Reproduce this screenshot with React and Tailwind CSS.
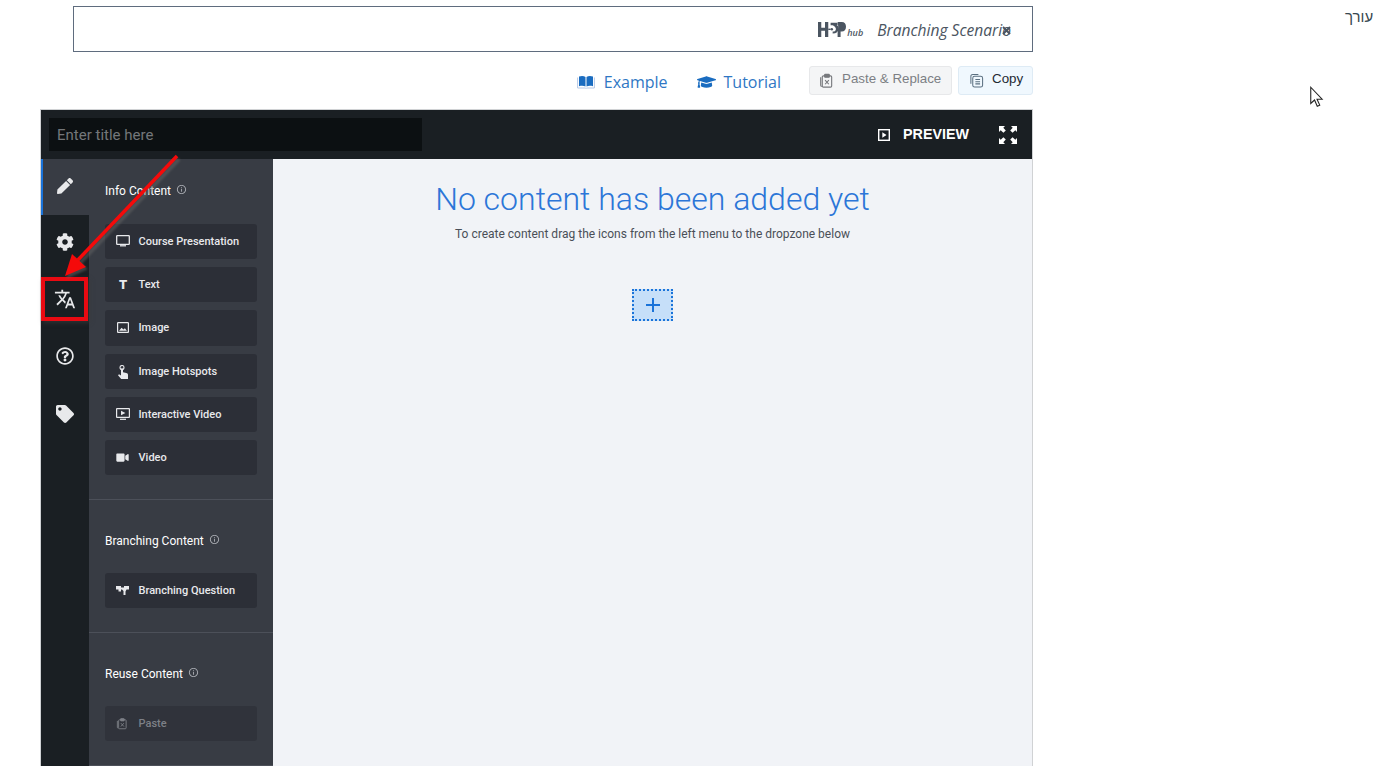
import React from "react";
import { FaPen, FaCog, FaTag, FaRegQuestionCircle, FaGraduationCap, FaVideo } from "react-icons/fa";
import { MdTranslate, MdInfoOutline } from "react-icons/md";

const roboto = "font-['Roboto',sans-serif]";

function ClipboardX({ className }) {
  return (
    <svg viewBox="0 0 16 16" className={className} fill="none" stroke="currentColor" strokeWidth="1.2">
      <rect x="3.5" y="3" width="10" height="12" rx="1.2" />
      <path d="M1.8 4.500v8.500a1.500 1.500 0 0 0 1.200 1.400" />
      <rect x="6" y="1.500" width="5" height="3" rx=".6" fill="currentColor" />
      <path d="M6.500 7.500l4 4.500M10.500 7.500l-4 4.500" />
    </svg>
  );
}

function CopyDoc({ className }) {
  return (
    <svg viewBox="0 0 16 16" className={className} fill="none" stroke="currentColor" strokeWidth="1.1">
      <path d="M2 11.500V3.500A2 2 0 0 1 4 1.500h6" />
      <rect x="4" y="3.500" width="10.500" height="11.500" rx="2" />
      <path d="M6.800 7h5M6.800 9.300h5M6.800 11.600h5" />
    </svg>
  );
}

function BookIcon() {
  return (
    <svg viewBox="0 0 18 14" className="w-[18px] h-[14px] mr-[9px]">
      <path d="M.6 2.500v10.500h7.400c.5 0 .8.500 1 .6.200-.1.500-.6 1-.6h7.400V2.500" fill="none" stroke="#b6c8e6" strokeWidth="1" />
      <path d="M2 1.500C4.500.6 7 .8 8.500 2v9.600C7 10.700 4.500 10.600 2 11.200z" fill="#1a6cc0" />
      <path d="M16 1.500C13.500.6 11 .8 9.500 2v9.600c1.500-.9 4-1 6.500-.4z" fill="#1a6cc0" />
    </svg>
  );
}

function TvIcon() {
  return (
    <svg viewBox="0 0 14 12" className="w-[14px] h-[12px] -mt-[1px]" fill="none" stroke="currentColor" strokeWidth="1.3">
      <rect x=".7" y=".7" width="12.600" height="8.600" rx=".6" />
      <path d="M4 10.800h6" />
    </svg>
  );
}

function TextIcon() {
  return <span className="w-[14px] text-center text-[13px] font-black leading-none font-['Roboto',sans-serif] -mt-[1px]">T</span>;
}

function ImageIcon() {
  return (
    <svg viewBox="0 0 12 11" className="w-[12px] h-[11px] ml-[1px]" fill="none" stroke="currentColor" strokeWidth="1.2">
      <rect x=".6" y=".6" width="10.800" height="9.800" rx=".5" />
      <path d="M2 8.700l2.600-3 1.800 1.800 1.500-1.300 2 2.500z" fill="currentColor" stroke="none" />
    </svg>
  );
}

function HotspotIcon() {
  return (
    <svg viewBox="0 0 12 14" className="w-[12px] h-[14px] ml-[1px]" fill="currentColor">
      <circle cx="5" cy="2.500" r="2" fill="none" stroke="currentColor" strokeWidth="1.100" />
      <path d="M4 3.500h2v3.700l3.300.7c1 .2 1.700.8 1.700 1.800V14H4.200L1 10.200l1-.9 2 1.200z" />
    </svg>
  );
}

function InteractiveVideoIcon() {
  return (
    <svg viewBox="0 0 14 12" className="w-[14px] h-[12px] -mt-[1px]" fill="none" stroke="currentColor" strokeWidth="1.2">
      <rect x=".6" y=".6" width="12.800" height="8.800" rx=".4" />
      <path d="M5 2.700v4.600L9.400 5z" fill="currentColor" stroke="none" />
      <path d="M4 11.300h6" />
    </svg>
  );
}

function BranchIcon() {
  return (
    <svg viewBox="0 0 13 9" className="w-[13px] h-[9px]" fill="currentColor">
      <path d="M0 0h5v1.500h3V0h5v3.500h-2.500L9.500 5.500V9H7.500V5L6 3.500H5V5.500H2.500V3.500H0z" />
    </svg>
  );
}

function ContentButton({ icon, label, disabled, className = "h-[35px]" }) {
  return (
    <div
      className={`w-[152px] rounded-[3px] flex items-center bg-[#2c2f37] pl-[11px] text-[11px] font-medium ${roboto} ${
        disabled ? "text-[#7d8087] bg-[#30333b]" : "text-[#e8e9ec]"
      } ${className}`}
    >
      <span className="w-[22.500px] flex items-center justify-start shrink-0">{icon}</span>
      <span className="pt-[1px]">{label}</span>
    </div>
  );
}

function Heading({ label }) {
  return (
    <div className={`flex items-center text-[12px] text-white leading-[16px] h-[16px] ${roboto}`}>
      <span>{label}</span>
      <MdInfoOutline className="ml-[5px] -mt-[3px] w-[11px] h-[11px] text-[#a8abb1]" />
    </div>
  );
}

function RailItem({ children, active }) {
  return (
    <div
      className={`h-[56px] w-[48px] flex items-center justify-center text-[#e8e9eb] ${
        active ? "bg-[#383c44] border-l-[2px] border-[#1a73d9] pr-[2px] pb-[2px]" : ""
      }`}
    >
      {children}
    </div>
  );
}

function FullscreenIcon() {
  return (
    <svg viewBox="0 0 18 18" className="w-[18px] h-[18px]" fill="#fff">
      <path d="M0 0h6L4.300 1.700 6.800 4.400 4.400 6.800 1.700 4.300 0 6zM18 0v6l-1.700-1.700L13.600 6.800 11.200 4.400l2.500-2.700L12 0zM0 18v-6l1.700 1.700L4.400 11.200 6.800 13.600l-2.500 2.700L6 18zM18 18h-6l1.700-1.700L11.200 13.600 13.600 11.200l2.700 2.500L18 12z" />
    </svg>
  );
}

function H5PLogo() {
  return (
    <div className="flex items-end">
      <svg viewBox="0 0 30 15" preserveAspectRatio="none" className="w-[28px] h-[15px]" fill="#4b5561">
        <path d="M0 0h3.500v5.800h4V0h3.500v15H7.500V8.800h-4V15H0z" />
        <rect x="11" y="6.600" width="2.500" height="1.400" />
        <circle cx="14.800" cy="7.300" r="1.300" />
        <path d="M13.500 .8h7.500v2.400h-1.200c2 .6 2.600 2.200 2.400 3.800-.3 2.600-2.400 4.600-6.500 4.600v-2c2.300 0 3.500-1 3.500-2.600 0-1.500-1.300-2.800-3.500-3.800h-2.200z" />
        <path d="M21 0h4.500c2.900 0 4.500 1.800 4.500 4.700s-1.700 4.900-4.500 4.900h-1.300V15H21v-4l.4-3.300c.5-2.500.2-4.800-.4-7.700z" />
      </svg>
      <span className="italic font-['Open_Sans',sans-serif] text-[9px] leading-[10px] text-[#4b5561] ml-[1px] -mb-[1px] font-semibold">hub</span>
    </div>
  );
}

export default function App() {
  return (
    <div className="relative w-[1393px] h-[766px] overflow-hidden bg-white flex items-start">
      <main className="ml-[40px] w-[993px] shrink-0 flex flex-col items-end pt-[6px]">
        <header className="w-[960px] h-[46px] border border-[#5f6c7e] flex items-center justify-end pr-[21px] gap-[14px]">
          <H5PLogo />
          <span className="italic text-[#4b5561] text-[15.600px] font-['Open_Sans',sans-serif] relative translate-y-[2px]">
            Branching Scenario
            <svg viewBox="0 0 9 9" className="absolute right-[0px] top-[7px] w-[9px] h-[9px]" stroke="#4b5561" strokeWidth="2" fill="none">
              <path d="M1 1l7 7M8 1l-7 7" />
            </svg>
          </span>
        </header>

        <nav className="mt-[13px] h-[30px] flex items-center">
          <a className="flex items-center text-[#2f77c4] text-[16px] font-['Open_Sans',sans-serif] translate-y-[2px]">
            <BookIcon />
            Example
          </a>
          <a className="ml-[29px] flex items-center text-[#2f77c4] text-[16px] font-['Open_Sans',sans-serif] translate-y-[2px]">
            <FaGraduationCap className="w-[19px] h-[16px] text-[#1a6cc0] mr-[8px]" />
            Tutorial
          </a>
          <button className="ml-[28px] h-[29px] w-[143px] rounded-[3px] border border-[#e7e8ea] bg-[#f4f5f6] text-[#7c7f84] flex items-center pl-[9px] pb-[2px] text-[13.333px] font-['Liberation_Sans',sans-serif]">
            <ClipboardX className="w-[15px] h-[15px] mr-[8px] mt-[2px] text-[#77797d]" />
            Paste &amp; Replace
          </button>
          <button className="ml-[6px] h-[29px] w-[75px] rounded-[3px] border border-[#deebf5] bg-[#f0f8fe] text-[#1f2a33] flex items-center pl-[10px] pb-[2px] text-[13.333px] font-['Liberation_Sans',sans-serif]">
            <CopyDoc className="w-[15px] h-[15px] mr-[8px] mt-[2px] text-[#5a6f80]" />
            Copy
          </button>
        </nav>

        <section className="mt-[14px] w-[993px] h-[657px] border-t border-l border-r border-[#d0d2d4] flex flex-col">
          <div className="h-[49px] shrink-0 bg-[#1a1f23] flex items-center pl-[8px] pr-[15px]">
            <div className={`w-[373px] h-[33px] bg-[#0c1012] pl-[8px] pt-[1px] flex items-center text-[15px] text-[#74777a] ${roboto}`}>
              Enter title here
            </div>
            <div className="ml-auto flex items-center">
              <svg viewBox="0 0 12 12" className="w-[12px] h-[12px]" fill="none" stroke="#fff" strokeWidth="1.400">
                <rect x=".7" y=".7" width="10.600" height="10.600" />
                <path d="M4.300 3.300v5.400L8.500 6z" fill="#fff" stroke="none" />
              </svg>
              <span className="ml-[13px] text-[14.300px] font-bold text-white font-['Liberation_Sans',sans-serif]">PREVIEW</span>
              <span className="ml-[30px]"><FullscreenIcon /></span>
            </div>
          </div>

          <div className="flex-1 flex min-h-0">
            <aside className="w-[48px] shrink-0 bg-[#1a1f23] flex flex-col">
              <RailItem active><FaPen className="w-[16px] h-[16px]" /></RailItem>
              <div className="flex flex-col -mt-[1px] gap-[1px]">
                <RailItem><FaCog className="w-[18px] h-[18px]" /></RailItem>
                <RailItem><MdTranslate className="w-[22px] h-[22px] -mt-[1px]" /></RailItem>
                <RailItem><FaRegQuestionCircle className="w-[18px] h-[18px]" /></RailItem>
                <RailItem><FaTag className="w-[18px] h-[18px] mt-[1px]" /></RailItem>
              </div>
            </aside>

            <div className="w-[184px] shrink-0 bg-[#383c44] flex flex-col">
              <div className="pl-[16px] pt-[24px] pb-[24px] border-b border-[#4c5059]">
                <Heading label="Info Content" />
                <div className="mt-[25px] flex flex-col gap-[8px]">
                  <ContentButton icon={<TvIcon />} label="Course Presentation" />
                  <ContentButton icon={<TextIcon />} label="Text" />
                  <ContentButton icon={<ImageIcon />} label="Image" className="h-[36px] pb-[1px]" />
                  <ContentButton icon={<HotspotIcon />} label="Image Hotspots" />
                  <ContentButton icon={<InteractiveVideoIcon />} label="Interactive Video" />
                  <ContentButton icon={<FaVideo className="w-[13px] h-[11px] -mt-[1px]" />} label="Video" />
                </div>
              </div>
              <div className="pl-[16px] pt-[33px] pb-[24px] border-b border-[#4c5059]">
                <Heading label="Branching Content" />
                <div className="mt-[24px]">
                  <ContentButton icon={<BranchIcon />} label="Branching Question" />
                </div>
              </div>
              <div className="pl-[16px] pt-[33px] pb-[24px] border-b border-[#4c5059]">
                <Heading label="Reuse Content" />
                <div className="mt-[24px]">
                  <ContentButton disabled icon={<ClipboardX className="w-[12px] h-[13px]" />} label="Paste" />
                </div>
              </div>
            </div>

            <div className={`flex-1 bg-[#f1f3f7] flex flex-col items-center ${roboto}`}>
              <h1 className="mt-[20px] text-[32px] leading-[40px] font-light text-[#2c76d8]">No content has been added yet</h1>
              <p className="mt-[6px] text-[12px] leading-[18px] text-[#4a4f58]">To create content drag the icons from the left menu to the dropzone below</p>
              <div className="mt-[46px] w-[41px] h-[32px] border-[2px] border-dotted border-[#1a73d9] bg-[#c6dff9] flex items-center justify-center">
                <svg viewBox="0 0 14 14" className="w-[14px] h-[14px]" fill="#1a73d9">
                  <path d="M6 0h2v6h6v2H8v6H6V8H0V6h6z" />
                </svg>
              </div>
            </div>
          </div>
        </section>
      </main>

      <div className="ml-[312px] mt-[8px] text-[15px] leading-[18px] text-[#37474f] font-['Liberation_Sans',sans-serif]" dir="rtl">עורך</div>

      <svg className="absolute left-[1304px] top-[84px] w-[20px] h-[26px]" viewBox="0 0 16 24">
        <path d="M5 3v15l3.500-3.200 2.500 5.700 2.300-1-2.500-5.500h4.700z" fill="#fff" stroke="#222" strokeWidth="1" />
      </svg>

      <div className="absolute left-[41px] top-[277px] w-[47px] h-[44px] border-[4px] border-[#ea0a12] shadow-[2px_2px_4px_rgba(60,60,60,0.6)]" />

      <svg className="absolute left-[50px] top-[150px] w-[140px] h-[135px] overflow-visible" viewBox="0 0 140 135">
        <g transform="translate(2 3)" opacity=".5" fill="#666" stroke="#666" className="blur-[1px]">
          <path d="M127 6L25 113" strokeWidth="4" fill="none" />
          <path d="M15 125l7-21 13 12z" />
        </g>
        <path d="M127 6L25 113" stroke="#f50a0a" strokeWidth="3.500" fill="none" />
        <path d="M15 126l7-22 14 13z" fill="#f50a0a" />
      </svg>
    </div>
  );
}
